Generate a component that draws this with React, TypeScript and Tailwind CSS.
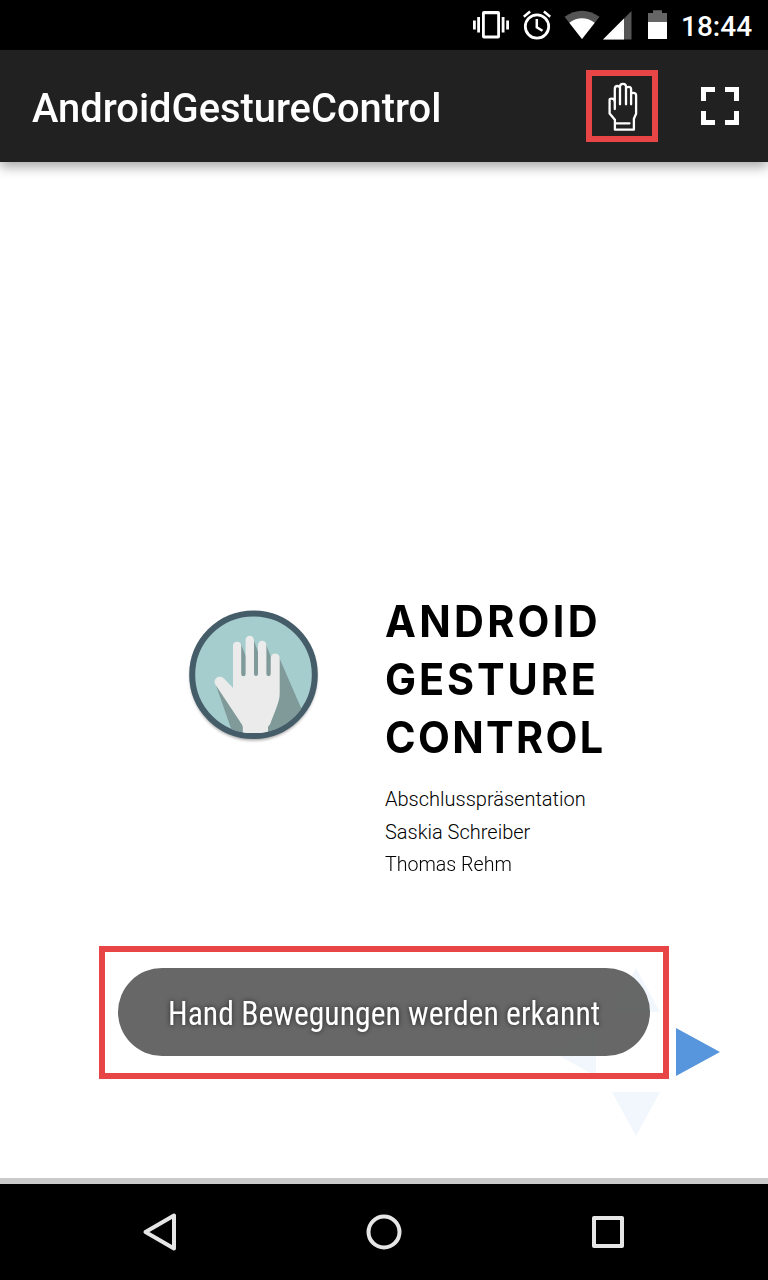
import React from "react";

function StatusBar() {
  return (
    <header className="flex h-[50px] shrink-0 items-center justify-end bg-black">
      <svg className="h-[50px] w-[220px]" viewBox="460 0 220 50">
        <g fill="#fff">
          <path fillRule="evenodd" d="M484 11h14a2 2 0 0 1 2 2v23.500a2 2 0 0 1-2 2h-14a2 2 0 0 1-2-2V13a2 2 0 0 1 2-2Zm.8 3.200v21.200h12.400V14.200Z" />
          <path d="M477.200 17h2.800v15.500h-2.800ZM473 20.500h2.800v9H473ZM501.700 17h2.800v15.500h-2.800ZM506.200 20.500h2.800v9h-2.800Z" />
        </g>
        <g fill="none" stroke="#fff" strokeWidth="2.800">
          <circle cx="537" cy="26.500" r="11.700" />
          <path d="M536.800 19v8.200l5.700 3.500M523.800 16.800l6.300-5.300M543.900 11.500l6.300 5.300" strokeWidth="2.500" />
        </g>
        <path d="M582 39 564.500 16.800Q582 4.800 599.500 16.800Z" fill="#555" />
        <path d="M582 39 569.300 22.700Q582 14 594.700 22.700Z" fill="#fff" />
        <path d="M603 39.500 631.500 11v28.500Z" fill="#555" />
        <path d="M603 39.500 624 18.500v21Z" fill="#fff" />
        <path d="M648 22V13h5v-2.800h9V13h5v9Z" fill="#666" />
        <path d="M648 22h19v17h-19Z" fill="#fff" />
      </svg>
      <span className="w-[88px] pl-[1px] pt-[3px] text-[28px] leading-none font-medium text-white">
        18:44
      </span>
    </header>
  );
}

function AppBar() {
  return (
    <div className="relative z-10 flex h-[112px] shrink-0 items-center bg-[#212121] pl-8 pr-[28px] shadow-[0_5px_11px_rgba(0,0,0,0.34)]">
      <h1 className="flex-1 pt-[5px] text-[40px] leading-none font-medium text-white">
        <span className="inline-block origin-left scale-x-[0.996]">AndroidGestureControl</span>
      </h1>
      <button aria-label="Hand" className="mr-[42px] flex h-[72px] w-[72px] items-center justify-center border-[6px] border-[#e84546]">
        <svg className="h-[60px] w-[60px] shrink-0" viewBox="592 76 60 60" fill="none" stroke="#fff" strokeWidth="2.300" strokeLinecap="round" strokeLinejoin="round">
          <path d="M614.800 109v-20c0-2.300 1.300-3 2.600-3s2 .7 2.600 1.500v16.800M620 87.500v-1c0-1.800 1.400-2.700 3-2.700s3 1 3 2.700v17.800M626 88c.6-.7 1.600-1.200 2.600-1.200 1.500 0 2.500.8 2.500 2.500v15M631.100 93.700c.7-.6 1.500-.8 2.200-.8 1.800 0 2.800.8 2.800 2.600v18.200l-2.200 5v11h-19v-10l-5.300-6.200V99.800c0-1.100.8-1.200 2-1.200 1.800 0 3.200 1.700 3.200 4.400M615 123.300h14.500" />
        </svg>
      </button>
      <button aria-label="Vollbild">
        <svg className="h-10 w-10" viewBox="700 86 40 40" fill="none" stroke="#fff" strokeWidth="5">
          <path d="M703.500 101V89.500H715M725 89.500h11.500V101M703.500 111v11.500H715M725 122.500h11.500V111" />
        </svg>
      </button>
    </div>
  );
}

function HandLogo() {
  return (
    <svg className="h-[150px] w-[150px]" viewBox="0 0 150 150">
      <defs>
        <clipPath id="disc"><circle cx="73.500" cy="74.500" r="59" /></clipPath>
        <filter id="soft" x="-20%" y="-20%" width="140%" height="140%"><feGaussianBlur stdDeviation="1.500" /></filter>
      </defs>
      <circle cx="73.500" cy="77" r="63.500" fill="#000" opacity=".35" filter="url(#soft)" />
      <circle cx="73.500" cy="74.700" r="61.300" fill="#a6cdce" stroke="#455d69" strokeWidth="6" />
      <g clipPath="url(#disc)">
        <path d="M35.500 84 55 140h9V122ZM60.500 43 69 64v14h-8ZM73 38 82 63v15h-8ZM85.500 43 94 65v13h-8ZM98.500 56 122 110 110 142H88V115Z" fill="#7f9a99" />
        <path d="M53 88V45a4.200 4.200 0 0 1 8.200 0v29a2.100 2.100 0 0 0 4.400 0V40a4.200 4.200 0 0 1 8.400 0v34a2 2 0 0 0 4 0V45a4.200 4.200 0 0 1 8.400 0v29a2.100 2.100 0 0 0 4.300 0V58a4.500 4.500 0 0 1 9 0v36c0 8-6 20-9.500 30-.5 2-2.200 1-2.200 4v5H62.800v-5c0-4-2-4.500-3.500-7.500L36 85.500C31.500 79.500 39 74 44 78.500Z" fill="#ebebeb" />
      </g>
    </svg>
  );
}

function Slide() {
  return (
    <section className="flex items-start pl-[180px] pt-[438px]">
      <HandLogo />
      <div className="ml-[55px] mt-[-8px] text-black">
        <h2 className="text-[44px] leading-[58px] font-bold" style={{ fontFamily: 'Inter, sans-serif' }}>
          <span className="block w-max origin-left scale-x-[0.94] tracking-[3.500px]">ANDROID</span>
          <span className="block w-max origin-left scale-x-[0.94] tracking-[3.100px]">GESTURE</span>
          <span className="block w-max origin-left scale-x-[0.94] tracking-[2.500px]">CONTROL</span>
        </h2>
        <div className="mt-[17px] text-[20px] leading-[32.500px] font-light">
          <p className="w-max origin-left">Abschlusspräsentation</p>
          <p className="w-max origin-left">Saskia Schreiber</p>
          <p className="w-max origin-left scale-x-[0.980]">Thomas Rehm</p>
        </div>
      </div>
    </section>
  );
}

function GesturePad() {
  return (
    <svg className="absolute left-[552px] top-[806px] h-[168px] w-[168px]" viewBox="0 0 168 168">
      <g fill="#f1f7fc">
        <path d="M84 0 108 44H60Z" />
        <path d="M0 84 44 60v48Z" />
        <path d="M60 124h48l-24 44Z" />
      </g>
      <path d="M124 60v48l44-24Z" fill="#5796dc" />
    </svg>
  );
}

function Toast() {
  return (
    <div className="absolute left-[99px] top-[784px] flex h-[133px] w-[570px] justify-center border-[6px] border-[#e84546] pt-4">
      <div className="flex h-[88px] w-[532px] items-center justify-center rounded-full bg-[#5b5b5b]/93 pt-[2px]">
        <span className="w-max scale-x-[0.960] text-[33px] leading-none whitespace-nowrap text-white [font-stretch:75%] [text-shadow:0_0_5px_rgba(0,0,0,0.65)]" style={{ fontFamily: '"Roboto Condensed", Roboto, sans-serif' }}>
          Hand Bewegungen werden erkannt
        </span>
      </div>
    </div>
  );
}

function NavBar() {
  return (
    <nav className="flex h-24 shrink-0 items-center justify-center gap-[176px] bg-black">
      <svg className="h-12 w-12" viewBox="0 0 48 48" fill="none" stroke="#e6e6e6" strokeWidth="4" strokeLinejoin="round">
        <path d="M38 7.500v33L9.500 24Z" />
      </svg>
      <svg className="h-12 w-12" viewBox="0 0 48 48" fill="none" stroke="#e6e6e6" strokeWidth="4">
        <circle cx="24" cy="24" r="15.500" />
      </svg>
      <svg className="h-12 w-12" viewBox="0 0 48 48" fill="none" stroke="#e6e6e6" strokeWidth="4" strokeLinejoin="round">
        <path d="M10 10h28v28H10Z" />
      </svg>
    </nav>
  );
}

export default function App() {
  return (
    <div className="flex h-[1280px] w-[768px] flex-col overflow-hidden bg-white" style={{ fontFamily: 'Roboto, sans-serif' }}>
      <StatusBar />
      <AppBar />
      <main className="relative h-[1022px] shrink-0 border-b-[6px] border-[#cacaca] bg-white">
        <Slide />
        <GesturePad />
        <Toast />
      </main>
      <NavBar />
    </div>
  );
}
